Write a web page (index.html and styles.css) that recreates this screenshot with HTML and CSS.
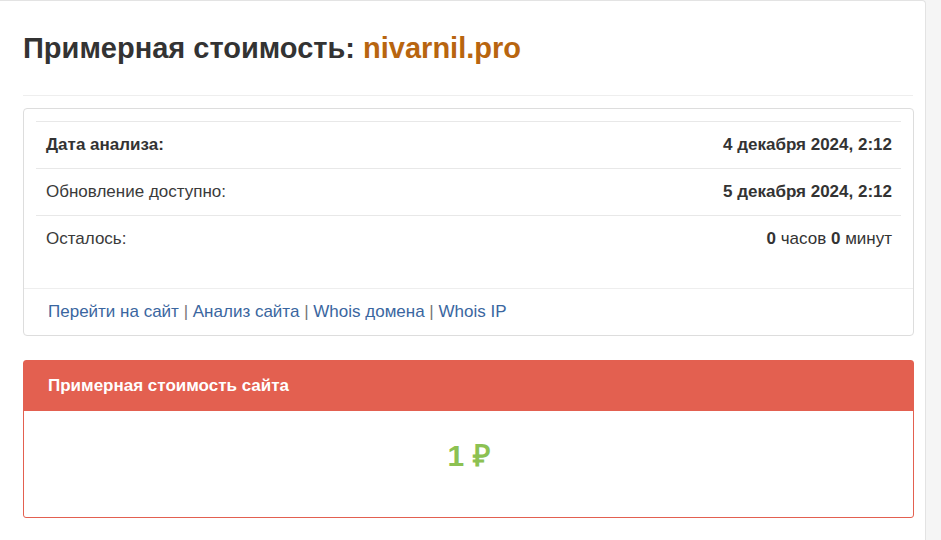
FILE: index.html
```html
<!DOCTYPE html>
<html lang="ru">
<head>
<meta charset="utf-8">
<title>Примерная стоимость: nivarnil.pro</title>
<link rel="stylesheet" href="styles.css">
</head>
<body>
<div class="page">
  <main class="main">
    <h1 class="title">Примерная стоимость: <span class="domain">nivarnil.pro</span></h1>
    <hr class="rule">
    <section class="card">
      <div class="card-body">
        <table class="info">
          <tr>
            <td class="label strong">Дата анализа:</td>
            <td class="value"><b>4 декабря 2024, 2:12</b></td>
          </tr>
          <tr>
            <td class="label">Обновление доступно:</td>
            <td class="value"><b>5 декабря 2024, 2:12</b></td>
          </tr>
          <tr>
            <td class="label">Осталось:</td>
            <td class="value"><b>0</b> часов <b>0</b> минут</td>
          </tr>
        </table>
      </div>
      <div class="card-footer">
        <a href="#">Перейти на сайт</a> <span class="sep">|</span> <a href="#">Анализ сайта</a> <span class="sep">|</span> <a href="#">Whois домена</a> <span class="sep">|</span> <a href="#">Whois IP</a>
      </div>
    </section>
    <section class="panel">
      <div class="panel-head">Примерная стоимость сайта</div>
      <div class="panel-body"><span class="price">1 ₽</span></div>
    </section>
  </main>
  <aside class="side"></aside>
</div>
</body>
</html>
```
FILE: styles.css
```css
html, body {
  margin: 0;
  padding: 0;
}
body {
  background: #f5f5f5;
  font-family: "Liberation Sans", Arial, sans-serif;
  color: #333;
  font-size: 17px;
}
.page {
  display: flex;
  min-height: 540px;
}
.main {
  width: 926px;
  box-sizing: border-box;
  background: #fff;
  border-top: 1px solid #e3e3e3;
  border-right: 1px solid #e3e3e3;
  border-top-right-radius: 4px;
  padding: 0 12px 40px 23px;
}
.side {
  flex: 1;
}
.title {
  margin: 31px 0 30px;
  font-size: 29px;
  line-height: 33px;
  font-weight: bold;
  color: #333;
}
.domain {
  color: #b8650f;
}
.rule {
  border: 0;
  border-top: 1px solid #eee;
  margin: 0 0 12px;
}
.card {
  border: 1px solid #ddd;
  border-radius: 4px;
  width: 891px;
  box-sizing: border-box;
}
.card-body {
  padding: 12px 12px 0;
}
.info {
  width: 100%;
  border-collapse: collapse;
  margin-bottom: 26px;
}
.info td {
  border-top: 1px solid #e8e8e8;
  padding: 12px 9px 12px 10px;
  line-height: 22px;
}
.info .label {
  color: #3a3a3a;
}
.info .strong {
  font-weight: bold;
  color: #333;
}
.info .value {
  text-align: right;
}
.card-footer {
  border-top: 1px solid #eee;
  padding: 12px 24px;
  line-height: 22px;
}
.card-footer a {
  color: #3a66a0;
  text-decoration: none;
}
.sep {
  color: #777;
}
.panel {
  margin-top: 24px;
  width: 891px;
  box-sizing: border-box;
  border: 1px solid #e36050;
  border-radius: 3px;
}
.panel-head {
  background: #e36050;
  color: #fff;
  font-weight: bold;
  padding: 14px 24px 15px;
  line-height: 21px;
}
.panel-body {
  text-align: center;
  padding: 25px 0 36px;
  line-height: 40px;
}
.price {
  color: #8cc152;
  font-size: 30px;
  font-weight: bold;
}
```
